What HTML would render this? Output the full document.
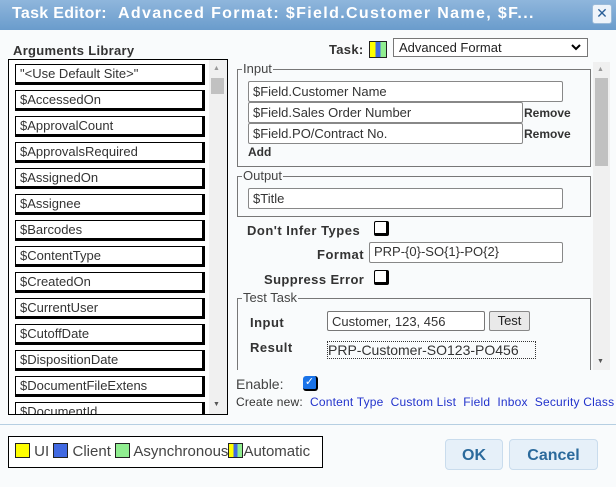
<!DOCTYPE html>
<html><head><style>
*{box-sizing:border-box}
body{margin:0;width:616px;height:487px;background:#f9fbfc;font-family:"Liberation Sans","DejaVu Sans",sans-serif;position:relative;overflow:hidden;color:#222}
.a{position:absolute}
.title{left:0;top:0;width:616px;height:30px;background:linear-gradient(#8fb6dc,#6a9ccc);color:#fff;font-weight:bold;font-size:16px;line-height:28px;white-space:pre}
.x{right:4px;top:4px;width:20px;height:20px;background:#eef4fa;border:1px solid #9bbbd9;border-radius:3px;color:#2a5f98;font-weight:bold;font-size:14px;line-height:17px;text-align:center}
.lib{left:8px;top:59px;width:220px;height:356px;border:1px solid #000;background:#fff;overflow:hidden}
.item{position:absolute;left:6px;width:190px;height:21px;border:1px solid #000;border-right-width:3px;border-bottom-width:3px;background:#fff;font-size:13px;line-height:17px;padding-left:4px;color:#333}
.sb{background:#f0f0f0}
.th{background:#c1c1c1}
.inp{position:absolute;height:21px;border:1px solid #888;border-radius:2px;background:#fff;font-size:13px;line-height:19px;padding-left:4px;color:#333}
fieldset{position:absolute;border:1px solid #777;margin:0;padding:0}
legend{font-size:13px;color:#444;padding:0 1px;margin-left:4px;line-height:12px}
.lbl{position:absolute;font-size:13px;font-weight:bold;color:#333;letter-spacing:0.5px}
.cb{position:absolute;width:15px;height:15px;border:1px solid #000;border-right-width:3px;border-bottom-width:3px;border-radius:2px;background:#fff}
.sw{display:inline-block;width:15px;height:15px;border:1px solid #222;vertical-align:-2px}
.btn{position:absolute;height:31px;border:1px solid #c9dced;border-radius:4px;background:#e6f0f9;color:#2b6a9c;font-weight:bold;font-size:16px;text-align:center;line-height:31px}
.lnk{color:#2233cc}
</style></head><body>
<div class="a title"><span style="position:absolute;left:12px;letter-spacing:0.3px">Task Editor:</span><span style="position:absolute;left:118px;letter-spacing:1.35px">Advanced Format: $Field.Customer Name, $F...</span></div>
<div class="a x">✕</div>
<div class="lbl" style="left:13px;top:43px;font-size:13px;letter-spacing:0.3px">Arguments Library</div>
<div class="a lib">
<div class="item" style="top:4px">"&lt;Use Default Site&gt;"</div>
<div class="item" style="top:30px">$AccessedOn</div>
<div class="item" style="top:56px">$ApprovalCount</div>
<div class="item" style="top:82px">$ApprovalsRequired</div>
<div class="item" style="top:108px">$AssignedOn</div>
<div class="item" style="top:134px">$Assignee</div>
<div class="item" style="top:160px">$Barcodes</div>
<div class="item" style="top:186px">$ContentType</div>
<div class="item" style="top:212px">$CreatedOn</div>
<div class="item" style="top:238px">$CurrentUser</div>
<div class="item" style="top:264px">$CutoffDate</div>
<div class="item" style="top:290px">$DispositionDate</div>
<div class="item" style="top:316px">$DocumentFileExtens</div>
<div class="item" style="top:342px">$DocumentId</div>
<div class="a sb" style="left:200px;top:0;width:18px;height:354px"></div>
<div class="a th" style="left:202px;top:18px;width:13px;height:16px"></div>
<div class="a" style="left:204px;top:5px;font-size:7px;color:#999">▲</div>
<div class="a" style="left:204px;top:341px;font-size:7px;color:#555">▼</div>
</div>
<div class="lbl" style="left:329px;top:42px;letter-spacing:0.3px">Task:</div>
<div class="a" style="left:369px;top:41px;width:18px;height:17px;border:1px solid #222;background:linear-gradient(90deg,#ff0 0,#ff0 33%,#4169e1 33%,#4169e1 66%,#90ee90 66%)"></div>
<div class="a" style="left:393px;top:38px;width:195px;height:19px;border:1px solid #777;background:#fff;font-size:13px;line-height:17px;padding-left:5px">Advanced Format<svg style="position:absolute;right:6px;top:5px" width="10" height="7"><path d="M1 1 L5 5 L9 1" stroke="#000" stroke-width="2" fill="none"/></svg></div>
<div class="a sb" style="left:593px;top:62px;width:17px;height:308px"></div>
<div class="a th" style="left:595px;top:78px;width:13px;height:88px"></div>
<div class="a" style="left:597px;top:66px;font-size:7px;color:#999">▲</div>
<div class="a" style="left:597px;top:358px;font-size:7px;color:#555">▼</div>
<fieldset style="left:237px;top:63px;width:354px;height:104px"><legend>Input</legend></fieldset>
<div class="inp" style="left:248px;top:81px;width:315px">$Field.Customer Name</div>
<div class="inp" style="left:248px;top:102px;width:275px">$Field.Sales Order Number</div>
<div class="inp" style="left:248px;top:123px;width:275px">$Field.PO/Contract No.</div>
<div class="a" style="left:524px;top:106px;font-size:12px;font-weight:bold;color:#333">Remove</div>
<div class="a" style="left:524px;top:127px;font-size:12px;font-weight:bold;color:#333">Remove</div>
<div class="a" style="left:248px;top:145px;font-size:12px;font-weight:bold;color:#333">Add</div>
<fieldset style="left:237px;top:170px;width:354px;height:47px"><legend>Output</legend></fieldset>
<div class="inp" style="left:248px;top:188px;width:315px">$Title</div>
<div class="lbl" style="left:247px;top:223px">Don't Infer Types</div>
<div class="cb" style="left:374px;top:221px"></div>
<div class="lbl" style="left:317px;top:247px">Format</div>
<div class="inp" style="left:369px;top:242px;width:194px;line-height:18px">PRP-{0}-SO{1}-PO{2}</div>
<div class="lbl" style="left:264px;top:272px;letter-spacing:0.4px">Suppress Error</div>
<div class="cb" style="left:374px;top:270px"></div>
<fieldset style="left:237px;top:292px;width:354px;height:90px;border-bottom:none"><legend>Test Task</legend></fieldset>
<div class="a" style="left:236px;top:370px;width:358px;height:14px;background:#f9fbfc"></div>
<div class="lbl" style="left:250px;top:315px">Input</div>
<div class="inp" style="left:327px;top:311px;width:158px;height:20px;border-color:#777">Customer, 123, 456</div>
<div class="a" style="left:489px;top:311px;width:41px;height:20px;border:1px solid #888;border-radius:2px;background:#e9e9e9;font-size:13px;text-align:center;line-height:18px">Test</div>
<div class="lbl" style="left:250px;top:340px">Result</div>
<div class="a" style="left:327px;top:341px;width:209px;height:18px;border:1px dotted #333;font-size:14px;line-height:16px;color:#333">PRP-Customer-SO123-PO456</div>
<div class="a" style="left:236px;top:376px;font-size:14px;color:#444">Enable:</div>
<div class="a" style="left:303px;top:376px;width:15px;height:15px;border-radius:3px;background:#1a73e8;border-right:2px solid #000;border-bottom:2px solid #000;color:#fff;font-size:11px;line-height:13px;text-align:center;font-weight:bold">✓</div>
<div class="a" style="left:236px;top:395px;font-size:12px;letter-spacing:0.2px;color:#333;white-space:nowrap">Create new: &nbsp;<span class="lnk">Content Type</span> &nbsp;<span class="lnk">Custom List</span> &nbsp;<span class="lnk">Field</span> &nbsp;<span class="lnk">Inbox</span> &nbsp;<span class="lnk">Security Class</span></div>
<div class="a" style="left:0;top:424px;width:616px;height:1px;background:#b6cfe2"></div>
<div class="a" style="left:8px;top:436px;width:315px;height:32px;border:1px solid #000;background:#fff;font-size:15px;line-height:30px;padding-left:6px;color:#444;white-space:nowrap"><span class="sw" style="background:#ff0"></span> UI <span class="sw" style="background:#4169e1"></span> Client <span class="sw" style="background:#90ee90"></span> Asynchronous<span class="sw" style="background:linear-gradient(90deg,#ff0 0,#ff0 33%,#4169e1 33%,#4169e1 66%,#90ee90 66%)"></span>Automatic</div>
<div class="btn" style="left:445px;top:439px;width:58px">OK</div>
<div class="btn" style="left:509px;top:439px;width:89px">Cancel</div>
</body></html>
